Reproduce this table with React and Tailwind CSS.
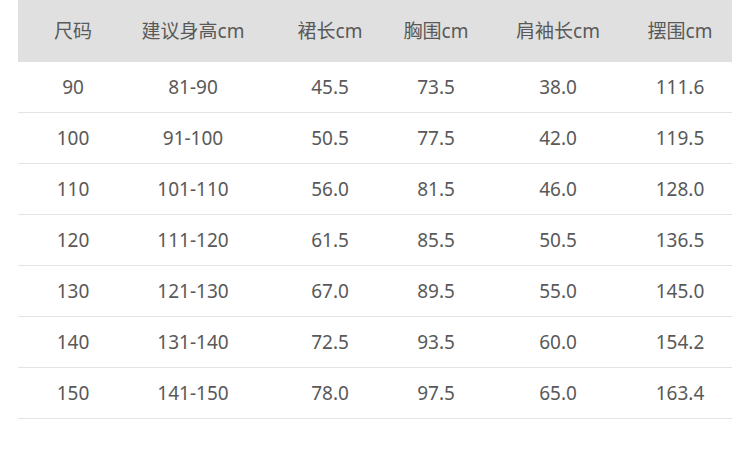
import React from 'react';

const headers = ['尺码', '建议身高cm', '裙长cm', '胸围cm', '肩袖长cm', '摆围cm'];

const rows = [
  ['90', '81-90', '45.5', '73.5', '38.0', '111.6'],
  ['100', '91-100', '50.5', '77.5', '42.0', '119.5'],
  ['110', '101-110', '56.0', '81.5', '46.0', '128.0'],
  ['120', '111-120', '61.5', '85.5', '50.5', '136.5'],
  ['130', '121-130', '67.0', '89.5', '55.0', '145.0'],
  ['140', '131-140', '72.5', '93.5', '60.0', '154.2'],
  ['150', '141-150', '78.0', '97.5', '65.0', '163.4'],
];

const cols = 'grid grid-cols-[110px_130px_144px_68px_176px_68px_1fr] items-center';

export default function App() {
  return (
    <div
      className="w-[750px] h-[460px] bg-white px-[18px] text-[19px] text-[#595959]"
      style={{ fontFamily: '"Noto Sans", "Noto Sans CJK SC", sans-serif' }}
    >
      {/* Header */}
      <div className={`${cols} h-[62px] bg-[#e0e0e0]`}>
        {headers.map((h) => (
          <div key={h} className="text-center whitespace-nowrap">{h}</div>
        ))}
        <div />
      </div>

      {/* Body */}
      {rows.map((r) => (
        <div key={r[0]} className={`${cols} h-[51px] border-b border-[#e4e4e4]`}>
          {r.map((v, i) => (
            <div key={i} className="text-center whitespace-nowrap">{v}</div>
          ))}
          <div />
        </div>
      ))}
    </div>
  );
}
